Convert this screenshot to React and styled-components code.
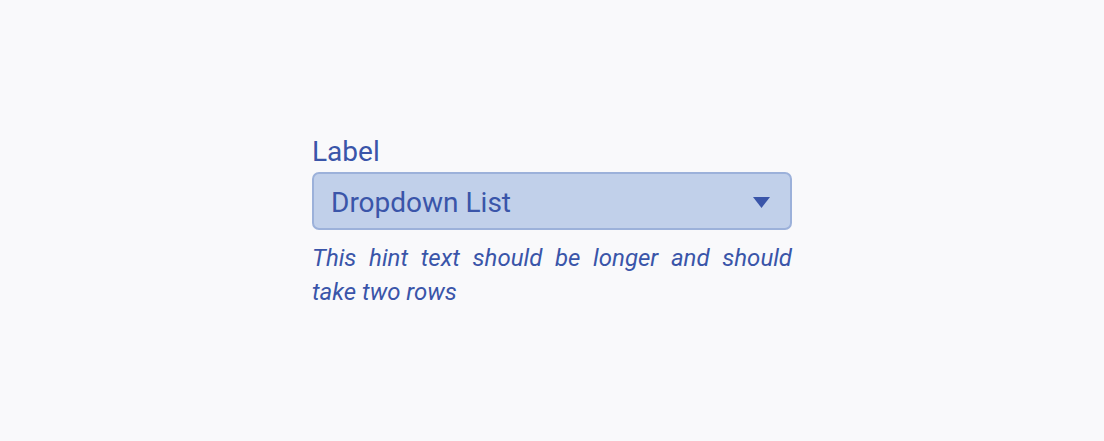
import React from "react";
import styled, { createGlobalStyle } from "styled-components";

const GlobalStyle = createGlobalStyle`
  html, body {
    margin: 0;
    padding: 0;
    background: #f9f9fb;
  }
  body {
    font-family: Roboto, "Liberation Sans", sans-serif;
  }
`;

const Page = styled.div`
  height: 100vh;
  display: flex;
  align-items: center;
  justify-content: center;
`;

const Field = styled.div`
  width: 480px;
  display: flex;
  flex-direction: column;
  color: #3a55a9;
  margin-top: 4px;
`;

const Label = styled.label`
  font-size: 28px;
  line-height: 32px;
  margin-bottom: 4px;
`;

const Select = styled.div`
  box-sizing: border-box;
  height: 58px;
  display: flex;
  align-items: center;
  justify-content: space-between;
  padding: 2px 20px 0 17px;
  background: #c1d0ea;
  border: 2px solid #9cb1da;
  border-radius: 7px;
  font-size: 28px;
  cursor: pointer;
`;

const Arrow = styled.svg`
  width: 17px;
  height: 11px;
  fill: #3a55a9;
`;

const Hint = styled.p`
  margin: 11px 0 0;
  font-size: 24px;
  line-height: 34px;
  font-style: italic;
  text-align: justify;
`;

const App = () => {
  return (
    <Page>
      <GlobalStyle />
      <Field>
        <Label>Label</Label>
        <Select>
          <span>Dropdown List</span>
          <Arrow viewBox="0 0 17 11">
            <polygon points="0,0 17,0 8.5,11" />
          </Arrow>
        </Select>
        <Hint>This hint text should be longer and should take two rows</Hint>
      </Field>
    </Page>
  );
};

export default App;
